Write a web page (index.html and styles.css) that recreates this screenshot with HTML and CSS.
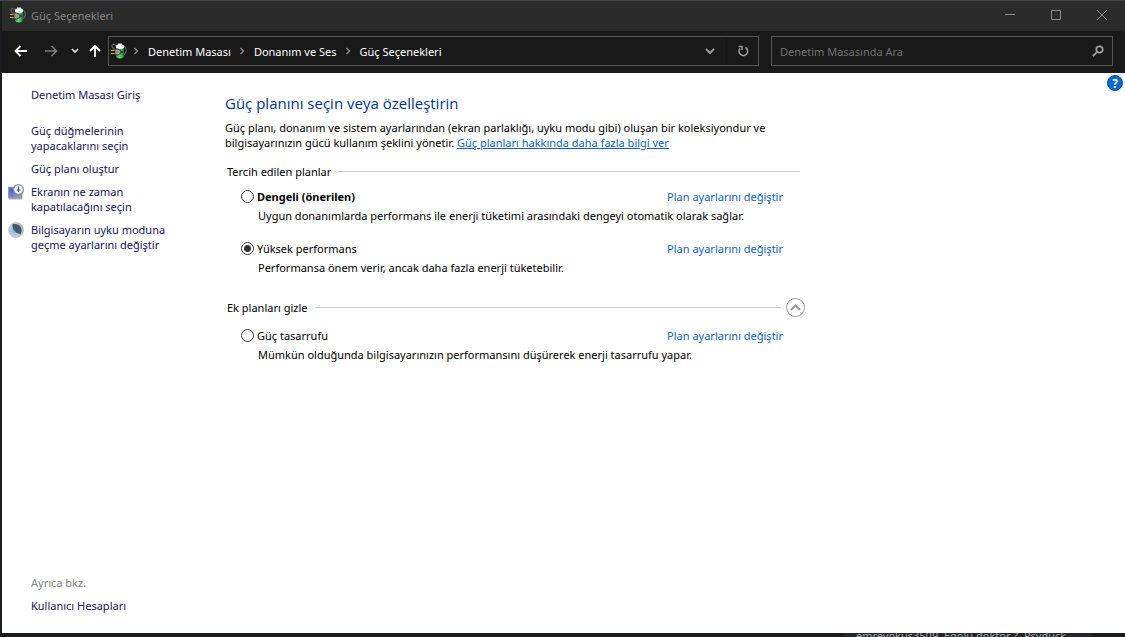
FILE: index.html
```html
<!DOCTYPE html>
<html lang="tr">
<head>
<meta charset="utf-8">
<meta name="viewport" content="width=device-width, initial-scale=1">
<title>Güç Seçenekleri</title>
<link rel="stylesheet" href="styles.css">
</head>
<body>
<svg class="defs" aria-hidden="true">
  <defs>
    <linearGradient id="cell" x1="0" x2="1" y1="0" y2="0">
      <stop offset="0" stop-color="#1d9a38"/><stop offset=".45" stop-color="#5fe070"/><stop offset="1" stop-color="#16702a"/>
    </linearGradient>
    <linearGradient id="screen" x1="0" x2="1" y1="0" y2="1">
      <stop offset="0" stop-color="#3451cf"/><stop offset="1" stop-color="#93a8f8"/>
    </linearGradient>
    <radialGradient id="orb" cx=".35" cy=".55" r=".65">
      <stop offset="0" stop-color="#8fb8ec"/><stop offset=".6" stop-color="#b9cfe8"/><stop offset="1" stop-color="#a9b0ba"/>
    </radialGradient>
    <linearGradient id="night" x1="1" x2="0" y1="0" y2="1">
      <stop offset="0" stop-color="#55585f"/><stop offset=".6" stop-color="#46536c"/><stop offset="1" stop-color="#6f93c8"/>
    </linearGradient>
    <symbol id="power" viewBox="0 0 16 16">
      <path d="M5 7C0 5 0 1 3 1.500Q5 2 6 4M13 3q3 2 2 6-1 3-4 3" fill="none" stroke="#626262" stroke-width="1.200"/>
      <path d="M5 4h8v9q0 2.500-4 2.500T5 13z" fill="url(#cell)"/>
      <path d="M5 5V3Q5 1.500 7 1.500V.5h4v1q2 0 2 1.500v2Q9 7 5 5z" fill="#f2f5f2"/>
      <path d="M0 7.500h4M0 10.500h4" stroke="#f5b400" stroke-width="1.200"/>
      <path d="M4 6h2.500L10 7.500v3L6.500 12H4z" fill="#999" stroke="#292929" stroke-width=".8"/>
      <path d="M9.500 9H12" stroke="#303030" stroke-width="1.500"/>
    </symbol>
    <symbol id="crumb" viewBox="0 0 6 8">
      <path d="M1.500 1l3 3-3 3" fill="none" stroke="#8c8c8c" stroke-width="1.400"/>
    </symbol>
  </defs>
</svg>

<div class="window">
  <header class="titlebar">
    <svg class="icon16"><use href="#power"/></svg>
    <h1 class="title">Güç Seçenekleri</h1>
    <div class="caption-buttons">
      <button type="button" class="caption" aria-label="Simge durumuna küçült"><svg width="10" height="10"><path d="M0 4.500h10"/></svg></button>
      <button type="button" class="caption" aria-label="Ekranı kapla"><svg width="10" height="10"><path d="M.5.500h9v9h-9z"/></svg></button>
      <button type="button" class="caption" aria-label="Kapat"><svg width="10" height="10"><path d="M0 0l10 10M10 0L0 10"/></svg></button>
    </div>
  </header>

  <nav class="toolbar" aria-label="Gezinti">
    <div class="history">
      <button type="button" class="tool" aria-label="Geri"><svg width="14" height="12"><path d="M13 6H2M6.500 1l-5 5 5 5" stroke="#fff" stroke-width="1.800"/></svg></button>
      <button type="button" class="tool" aria-label="İleri"><svg width="14" height="12"><path d="M1 6h11M7.500 1l5 5-5 5" stroke="#7c7c7c" stroke-width="1.600"/></svg></button>
      <button type="button" class="tool small" aria-label="Son konumlar"><svg width="8" height="6"><path d="M1 1l3 3 3-3" stroke="#e6e6e6" stroke-width="1.600"/></svg></button>
      <button type="button" class="tool" aria-label="Yukarı"><svg width="12" height="14"><path d="M6 13V2M1 7l5-5 5 5" stroke="#fff" stroke-width="1.800"/></svg></button>
    </div>
    <div class="address">
      <svg class="icon16"><use href="#power"/></svg>
      <ol class="crumbs">
        <li><svg class="sep"><use href="#crumb"/></svg><a href="#">Denetim Masası</a></li>
        <li><svg class="sep"><use href="#crumb"/></svg><a href="#">Donanım ve Ses</a></li>
        <li><svg class="sep"><use href="#crumb"/></svg><a href="#">Güç Seçenekleri</a></li>
      </ol>
      <button type="button" class="address-button" aria-label="Önceki konumlar"><svg width="10" height="7"><path d="M1 1l4 4 4-4" stroke="#9a9a9a" stroke-width="2"/></svg></button>
      <button type="button" class="address-button refresh" aria-label="Yenile"><svg width="12" height="12"><path d="M8.500 2.500A4.300 4.300 0 1 1 3 3.500" stroke="#9a9a9a" stroke-width="1.600"/><path d="M1.500 1.500H5V5" stroke="#9a9a9a" stroke-width="1.500"/></svg></button>
    </div>
    <div class="search">
      <input class="search-input" type="search" placeholder="Denetim Masasında Ara" aria-label="Denetim Masasında Ara">
      <svg class="search-icon" width="12" height="12"><circle cx="7.500" cy="4.500" r="3.200" fill="none" stroke="#a0a0a0" stroke-width="1.700"/><path d="M5.200 6.800L.8 11.200" stroke="#a0a0a0" stroke-width="1.800"/></svg>
    </div>
  </nav>

  <div class="content">
    <aside class="sidebar">
      <a class="home" href="#">Denetim Masası Giriş</a>
      <ul class="tasks">
        <li><a href="#">Güç düğmelerinin<br>yapacaklarını seçin</a></li>
        <li><a href="#">Güç planı oluştur</a></li>
        <li>
          <svg class="icon16 task-icon" viewBox="0 0 16 16"><path d="M.7 3.500h13v10H.7z" fill="url(#screen)" stroke="#9096a0" stroke-width="1.400"/><path d="M1 14.800h13" stroke="#9a9a9a" stroke-width="1.200"/><circle cx="10.500" cy="5.500" r="4.900" fill="#eef6fa" stroke="#8d8d8d" stroke-width="1.200"/><path d="M10.500 2.500V8M8.500 6h4" stroke="#35516a"/></svg>
          <a href="#">Ekranın ne zaman<br>kapatılacağını seçin</a>
        </li>
        <li>
          <svg class="icon16 task-icon" viewBox="0 0 16 16"><circle cx="8" cy="8" r="7.500" fill="url(#orb)" stroke="#c5c9d0"/><path d="M4.500 2.500C8 1 13.500 3 13.700 8.500q0 2-1.200 3.500C8 12 4 8 4.500 2.500z" fill="url(#night)"/></svg>
          <a href="#">Bilgisayarın uyku moduna<br>geçme ayarlarını değiştir</a>
        </li>
      </ul>
      <div class="see-also">
        <p class="see-also-title">Ayrıca bkz.</p>
        <a href="#">Kullanıcı Hesapları</a>
      </div>
    </aside>

    <main class="main">
      <h2 class="heading">Güç planını seçin veya özelleştirin</h2>
      <p class="intro">Güç planı, donanım ve sistem ayarlarından (ekran parlaklığı, uyku modu gibi) oluşan bir koleksiyondur ve<br>bilgisayarınızın gücü kullanım şeklini yönetir. <a href="#">Güç planları hakkında daha fazla bilgi ver</a></p>

      <section class="group">
        <h3 class="group-title">Tercih edilen planlar</h3>
        <div class="plans">
          <div class="plan">
            <input type="radio" name="plan" id="balanced">
            <label class="recommended" for="balanced">Dengeli (önerilen)</label>
            <a href="#">Plan ayarlarını değiştir</a>
            <p>Uygun donanımlarda performans ile enerji tüketimi arasındaki dengeyi otomatik olarak sağlar.</p>
          </div>
          <div class="plan">
            <input type="radio" name="plan" id="high" checked>
            <label for="high">Yüksek performans</label>
            <a href="#">Plan ayarlarını değiştir</a>
            <p>Performansa önem verir, ancak daha fazla enerji tüketebilir.</p>
          </div>
        </div>
      </section>

      <section class="group extra">
        <div class="group-row">
          <h3 class="group-title">Ek planları gizle</h3>
          <button type="button" class="collapse" aria-label="Ek planları gizle"><svg width="11" height="7"><path d="M1 6l4.500-4.500L10 6"/></svg></button>
        </div>
        <div class="plans">
          <div class="plan">
            <input type="radio" name="plan" id="saver">
            <label for="saver">Güç tasarrufu</label>
            <a href="#">Plan ayarlarını değiştir</a>
            <p>Mümkün olduğunda bilgisayarınızın performansını düşürerek enerji tasarrufu yapar.</p>
          </div>
        </div>
      </section>
    </main>

    <button type="button" class="help" aria-label="Yardım">?</button>
  </div>
</div>
<div class="behind"><p>emreyokus3509, Egolu doktor ?, Psyduck</p></div>
</body>
</html>
```
FILE: styles.css
```css
* {
  box-sizing: border-box;
  margin: 0;
  padding: 0;
}

body {
  display: flex;
  flex-direction: column;
  min-height: 100vh;
  background: #1a1c20;
  border-top: 1px solid #454850;
  color: #000;
  font: 11px/15px "Noto Sans", "Open Sans", sans-serif;
}

button {
  display: flex;
  align-items: center;
  justify-content: center;
  border: 0;
  background: none;
  font: inherit;
}

a {
  color: #0a62cc;
  text-decoration: none;
}

ul,
ol {
  list-style: none;
}

.defs {
  position: absolute;
  width: 0;
  height: 0;
}

.icon16 {
  flex: none;
  width: 16px;
  height: 16px;
}

.window {
  display: flex;
  flex: 1;
  flex-direction: column;
  margin-left: 2px;
}

/* Title bar */
.titlebar {
  display: flex;
  align-items: center;
  height: 30px;
  padding: 0 0 2px 8px;
  background: #2b2b2b;
}

.title {
  flex: 1;
  padding-left: 5px;
  color: #858585;
  font-size: 11px;
  font-weight: 400;
}

.caption-buttons {
  display: flex;
}

.caption {
  width: 46px;
  height: 28px;
}

.caption path {
  fill: none;
  stroke: #8c8c8c;
}

/* Toolbar */
.toolbar {
  display: flex;
  align-items: center;
  height: 42px;
  padding: 0 12px 2px 0;
  background: #191919;
}

.history {
  display: flex;
  flex: none;
  align-items: center;
  width: 106px;
  padding-left: 4px;
}

.tool {
  width: 30px;
  height: 30px;
}

.tool:last-child {
  width: 24px;
}

.tool.small {
  width: 17px;
}

.tool path,
.address-button path {
  fill: none;
}

.address,
.search {
  display: flex;
  align-items: center;
  height: 30px;
  border: 1px solid #535353;
}

.address {
  flex: 651 1 651px;
  padding-left: 2px;
}

.crumbs {
  display: flex;
  flex: 1;
  padding-left: 6px;
}

.crumbs li {
  display: flex;
  align-items: center;
}

.crumbs a {
  padding: 0 8px 0 9px;
  color: #fff;
}

.sep {
  width: 6px;
  height: 8px;
}

.address-button {
  width: 32px;
  height: 28px;
}

.refresh {
  border-left: 1px solid #151515;
}

.search {
  flex: 342 1 342px;
  margin-left: 12px;
  padding: 0 8px;
}

.search-input {
  flex: 1;
  min-width: 0;
  border: 0;
  outline: 0;
  background: none;
  color: #fff;
  font: inherit;
}

.search-input::placeholder {
  color: #727272;
  opacity: 1;
}

.search-icon {
  flex: none;
}

/* Page */
.content {
  position: relative;
  display: flex;
  flex: 1;
  background: #fff;
}

.sidebar {
  display: flex;
  flex: none;
  flex-direction: column;
  width: 223px;
  padding: 14px 0 20px 29px;
}

.sidebar a {
  color: #151560;
}

.tasks {
  display: flex;
  flex-direction: column;
  gap: 8px;
  padding-top: 21px;
}

.tasks li {
  position: relative;
}

.task-icon {
  position: absolute;
  top: 0;
  left: -23px;
}

.see-also {
  margin-top: auto;
}

.see-also-title {
  padding-bottom: 8px;
  color: #828282;
}

.main {
  flex: 1;
  max-width: 580px;
  padding-top: 20px;
}

.heading {
  color: #003399;
  font-family: "Open Sans", "Noto Sans", sans-serif;
  font-size: 15px;
  font-weight: 400;
  line-height: 20px;
}

.intro {
  padding-top: 7px;
  white-space: nowrap;
}

.intro a {
  text-decoration: underline;
}

.group {
  padding: 14px 5px 0 2px;
}

.group-title {
  display: flex;
  flex: 1;
  align-items: center;
  gap: 7px;
  font-size: 11px;
  font-weight: 400;
}

.group-title::after {
  flex: 1;
  height: 1px;
  background: #cbcbcb;
  content: "";
}

.plans {
  display: flex;
  flex-direction: column;
  gap: 18px;
  padding: 10px 17px 0 14px;
}

.plan {
  display: grid;
  grid-template-columns: 13px 1fr auto;
  column-gap: 3px;
  row-gap: 4px;
  align-items: center;
}

.plan p {
  grid-column: 2 / 4;
  padding-left: 1px;
}

.recommended {
  font-weight: 700;
}

.plan input {
  width: 13px;
  height: 13px;
  border: 1px solid #333;
  border-radius: 50%;
  appearance: none;
  background: #fff;
}

.plan input:checked {
  background: radial-gradient(circle, #333 3px, #fff 4px);
}

.extra {
  padding-top: 23px;
  padding-right: 0;
}

.group-row {
  display: flex;
  align-items: center;
  gap: 5px;
}

.collapse {
  width: 19px;
  height: 19px;
  border: 1px solid #999;
  border-radius: 50%;
}

.collapse path {
  fill: none;
  stroke: #999;
  stroke-width: 2;
}

.extra .plans {
  padding-top: 11px;
  padding-right: 22px;
}

.help {
  position: absolute;
  top: 2px;
  right: 2px;
  width: 16px;
  height: 16px;
  border: 1px solid #08509a;
  border-radius: 50%;
  background: #0869cf;
  color: #fff;
  font-size: 12px;
  font-weight: 700;
}

/* Strip of the window underneath */
.behind {
  height: 4px;
  overflow: hidden;
}

.behind p {
  width: 248px;
  margin: -5px 33px 0 auto;
  padding-left: 12px;
  background: #24282e;
  color: #a5a8ad;
}
```
